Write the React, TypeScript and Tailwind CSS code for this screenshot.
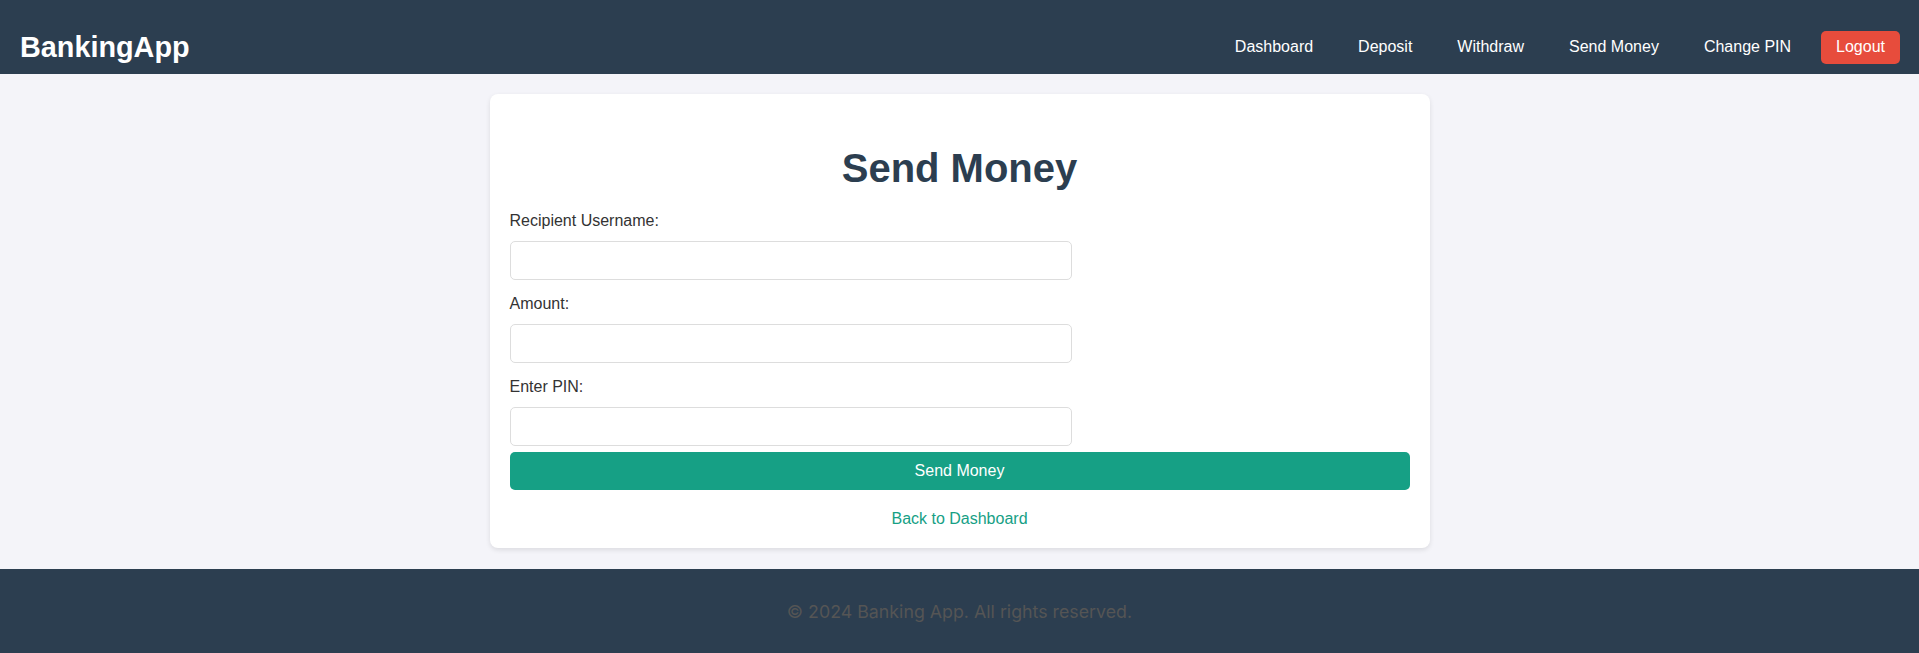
import React from "react";

export default function App() {
  const navLinks = ["Dashboard", "Deposit", "Withdraw", "Send Money", "Change PIN"];
  const fields = [
    { label: "Recipient Username:", type: "text" },
    { label: "Amount:", type: "number" },
    { label: "Enter PIN:", type: "password" },
  ];
  return (
    <div className="min-h-[653px] bg-[#f4f4f9] text-[16px] text-[#333] font-['Liberation_Sans',Arial,sans-serif] flex flex-col">
      <header className="h-[74px] bg-[#2c3e50] pt-[20px] pl-[20px] pr-[19px] flex items-center justify-between">
        <div className="text-white font-bold text-[28.8px] leading-[33px]">BankingApp</div>
        <nav className="flex items-center gap-[15px]">
          {navLinks.map((l) => (
            <a key={l} className="text-white px-[15px] py-[8px] leading-[18px]">
              {l}
            </a>
          ))}
          <a className="text-white bg-[#e74c3c] rounded-[5px] px-[15px] h-[33px] flex items-center leading-[18px]">
            Logout
          </a>
        </nav>
      </header>

      <main className="pt-[20px] pb-[21px]">
        <div className="w-[940px] mx-auto bg-white rounded-[8px] shadow-[0_2px_5px_rgba(0,0,0,0.1)] px-[20px] pt-[20px] pb-[20px]">
          <h1 className="text-center text-[#2c3e50] font-bold text-[40px] leading-[46px] mt-[31px] mb-[21px]">
            Send Money
          </h1>
          <form className="flex flex-col">
            {fields.map((f, i) => (
              <div key={f.label} className="flex flex-col">
                <label className="block leading-[18px] mb-[11px] text-[#333]">{f.label}</label>
                <input
                  type={f.type}
                  className={`w-[562px] h-[39px] border border-[#ddd] rounded-[5px] px-[10px] bg-white outline-none ${
                    i === 2 ? "mb-[6px]" : "mb-[15px]"
                  }`}
                />
              </div>
            ))}
            <button
              type="button"
              className="w-full h-[38px] bg-[#16a085] text-white rounded-[5px] leading-[18px]"
            >
              Send Money
            </button>
          </form>
          <div className="text-center mt-[20px] leading-[18px]">
            <a className="text-[#16a085]">Back to Dashboard</a>
          </div>
        </div>
      </main>

      <footer className="h-[86px] bg-[#2c3e50] flex items-center justify-center">
        <p className="text-[#555] text-[17.8px] font-['Inter',sans-serif]">
          © 2024 Banking App. All rights reserved.
        </p>
      </footer>
    </div>
  );
}
